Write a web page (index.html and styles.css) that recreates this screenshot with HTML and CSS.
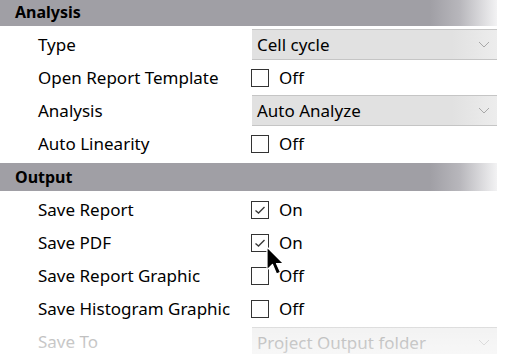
FILE: index.html
```html
<!DOCTYPE html>
<html>
<head>
<meta charset="utf-8">
<link rel="stylesheet" href="styles.css">
</head>
<body>
<div class="grid">
  <div class="section">Analysis</div>
  <div class="row">
    <div class="label">Type</div>
    <div class="value"><div class="select"><span>Cell cycle</span><svg class="chev" width="12" height="7" viewBox="0 0 12 7"><path d="M1 1 L6 6 L11 1" fill="none" stroke="#a8a8a8" stroke-width="1"/></svg></div></div>
  </div>
  <div class="row">
    <div class="label">Open Report Template</div>
    <div class="value"><span class="box"></span><span class="vtext">Off</span></div>
  </div>
  <div class="row">
    <div class="label">Analysis</div>
    <div class="value"><div class="select"><span>Auto Analyze</span><svg class="chev" width="12" height="7" viewBox="0 0 12 7"><path d="M1 1 L6 6 L11 1" fill="none" stroke="#a8a8a8" stroke-width="1"/></svg></div></div>
  </div>
  <div class="row">
    <div class="label">Auto Linearity</div>
    <div class="value"><span class="box"></span><span class="vtext">Off</span></div>
  </div>
  <div class="section second">Output</div>
  <div class="row">
    <div class="label">Save Report</div>
    <div class="value"><span class="box"><svg width="16" height="16" viewBox="0 0 16 16"><path d="M3.5 8.5 L6.5 11 L12.5 5" fill="none" stroke="#3a3a3a" stroke-width="1.4"/></svg></span><span class="vtext">On</span></div>
  </div>
  <div class="row">
    <div class="label">Save PDF</div>
    <div class="value"><span class="box"><svg width="16" height="16" viewBox="0 0 16 16"><path d="M3.5 8.5 L6.5 11 L12.5 5" fill="none" stroke="#3a3a3a" stroke-width="1.4"/></svg></span><span class="vtext">On</span></div>
  </div>
  <div class="row">
    <div class="label">Save Report Graphic</div>
    <div class="value"><span class="box"></span><span class="vtext">Off</span></div>
  </div>
  <div class="row">
    <div class="label">Save Histogram Graphic</div>
    <div class="value"><span class="box"></span><span class="vtext">Off</span></div>
  </div>
  <div class="row disabled">
    <div class="label">Save To</div>
    <div class="value"><div class="select"><span>Project Output folder</span><svg class="chev" width="12" height="7" viewBox="0 0 12 7"><path d="M1 1 L6 6 L11 1" fill="none" stroke="#d0d0d0" stroke-width="1"/></svg></div></div>
  </div>
</div>
<div class="fade-right"></div>
<div class="fade-bottom"></div>
<svg class="cursor" width="22" height="32" viewBox="0 0 22 32">
  <path d="M1 1 L1 24 L6.5 18.5 L10.5 28 L14.5 26.3 L10.5 17.5 L17.5 17.5 Z" fill="#000" stroke="#fff" stroke-width="1.2" stroke-linejoin="round"/>
</svg>
</body>
</html>
```
FILE: styles.css
```css
html, body {
  margin: 0;
  padding: 0;
  background: #fff;
  width: 505px;
  height: 354px;
  overflow: hidden;
  position: relative;
}
body {
  font-family: "Noto Sans", "Open Sans", sans-serif;
  font-size: 17px;
  color: #000;
}
.grid {
  display: flex;
  flex-direction: column;
  width: 498px;
  margin-top: -2px;
}
.section {
  height: 28px;
  background: linear-gradient(to right, #a09fa5 0, #a09fa5 430px, #b8b7bc 460px, #f4f4f5 498px);
  font-weight: bold;
  padding-left: 15px;
  display: flex;
  align-items: center;
  font-size: 16px;
  margin-bottom: 2px;
}
.section.second {
  margin-top: 3px;
}
.row {
  height: 33px;
  display: flex;
  align-items: center;
}
.label {
  width: 214px;
  padding-left: 38px;
  white-space: nowrap;
}
.value {
  flex: 1;
  display: flex;
  align-items: center;
  height: 100%;
}
.select {
  flex: 1;
  height: 29px;
  background: linear-gradient(to right, #e1e1e1 0, #e1e1e1 200px, #ededed 246px);
  border-top: 1px solid #c5c5c5;
  border-bottom: 1px solid #c5c5c5;
  display: flex;
  align-items: center;
  justify-content: space-between;
  padding-left: 5px;
  padding-right: 8px;
}
.box {
  width: 16px;
  height: 16px;
  border: 1px solid #333;
  display: flex;
  align-items: center;
  justify-content: center;
  margin-left: -1px;
}
.vtext {
  margin-left: 10px;
}
.disabled .label, .disabled .select span {
  color: #b4b4b4;
}
.disabled .select {
  background: #f2f2f2;
  border-top-color: #dcdcdc;
  border-bottom: none;
}
.fade-right {
  position: absolute;
  top: 0;
  right: 0;
  width: 8px;
  height: 354px;
  background: #fff;
}
.fade-bottom {
  position: absolute;
  left: 0;
  bottom: 0;
  width: 505px;
  height: 30px;
  background: linear-gradient(to bottom, rgba(255,255,255,0), rgba(255,255,255,0.4));
}
.cursor {
  position: absolute;
  left: 266px;
  top: 246px;
}
```
